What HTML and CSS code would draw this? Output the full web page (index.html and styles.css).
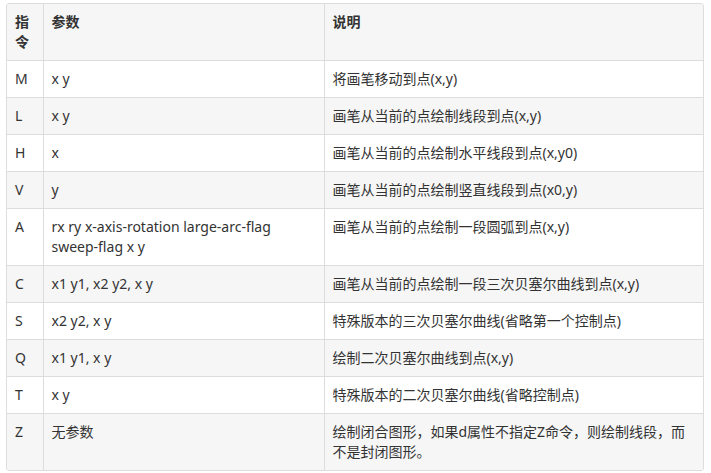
FILE: index.html
```html
<!DOCTYPE html>
<html lang="zh">
<head>
<meta charset="utf-8">
<link rel="stylesheet" href="styles.css">
</head>
<body>
<div class="wrap">
<table class="cmd">
<colgroup><col class="c1"><col class="c2"><col class="c3"></colgroup>
<thead>
<tr><th>指令</th><th>参数</th><th>说明</th></tr>
</thead>
<tbody>
<tr><td>M</td><td>x y</td><td>将画笔移动到点(x,y)</td></tr>
<tr><td>L</td><td>x y</td><td>画笔从当前的点绘制线段到点(x,y)</td></tr>
<tr><td>H</td><td>x</td><td>画笔从当前的点绘制水平线段到点(x,y0)</td></tr>
<tr><td>V</td><td>y</td><td>画笔从当前的点绘制竖直线段到点(x0,y)</td></tr>
<tr><td>A</td><td>rx ry x-axis-rotation large-arc-flag sweep-flag x y</td><td>画笔从当前的点绘制一段圆弧到点(x,y)</td></tr>
<tr><td>C</td><td>x1 y1, x2 y2, x y</td><td>画笔从当前的点绘制一段三次贝塞尔曲线到点(x,y)</td></tr>
<tr><td>S</td><td>x2 y2, x y</td><td>特殊版本的三次贝塞尔曲线(省略第一个控制点)</td></tr>
<tr><td>Q</td><td>x1 y1, x y</td><td>绘制二次贝塞尔曲线到点(x,y)</td></tr>
<tr><td>T</td><td>x y</td><td>特殊版本的二次贝塞尔曲线(省略控制点)</td></tr>
<tr><td>Z</td><td>无参数</td><td>绘制闭合图形，如果d属性不指定Z命令，则绘制线段，而不是封闭图形。</td></tr>
</tbody>
</table>
</div>
</body>
</html>
```
FILE: styles.css
```css
html, body {
  margin: 0;
  padding: 0;
  background: #ffffff;
}
body {
  font-family: "Noto Sans", "Noto Sans CJK SC", sans-serif;
  font-size: 14px;
  color: #333333;
}
.wrap {
  margin: 3px 8px 0 6px;
  width: 696px;
  border: 1px solid #dddddd;
  border-radius: 3px;
  overflow: hidden;
}
.cmd {
  width: 100%;
  border-collapse: collapse;
  table-layout: fixed;
}
.c1 { width: 36px; }
.c2 { width: 281px; }
.cmd th, .cmd td {
  padding: 8px 8px;
  line-height: 20px;
  text-align: left;
  vertical-align: top;
  border-left: 1px solid #dddddd;
  border-top: 1px solid #dddddd;
  word-break: normal;
  overflow-wrap: break-word;
}
.cmd tr > :first-child { border-left: none; }
.cmd thead tr th { border-top: none; }
.cmd th {
  font-weight: bold;
  background: #f6f6f6;
}
.cmd tbody tr:nth-child(even) td { background: #f6f6f6; }
.cmd tbody tr:nth-child(odd) td { background: #ffffff; }
```
